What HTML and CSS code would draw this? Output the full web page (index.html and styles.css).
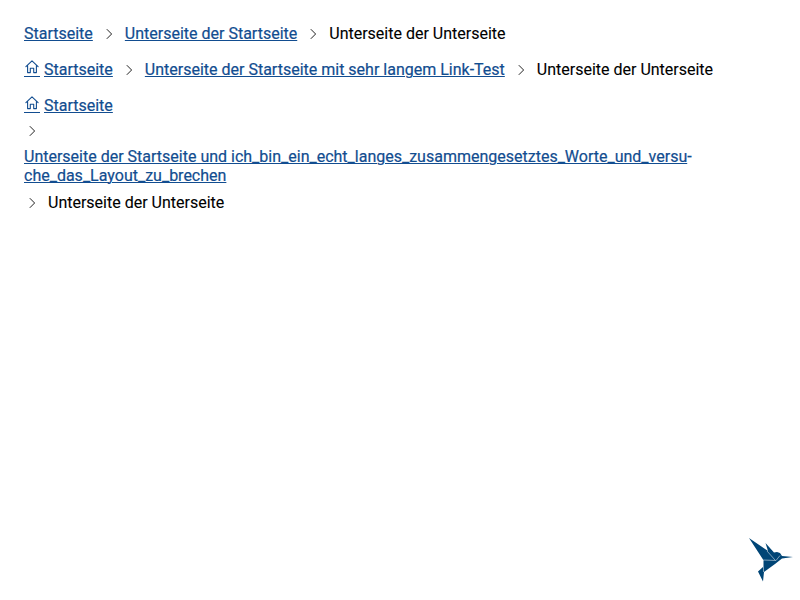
FILE: index.html
```html
<!DOCTYPE html>
<html lang="de">
<head>
<meta charset="utf-8">
<title>Breadcrumb</title>
<link rel="stylesheet" href="styles.css">
</head>
<body>
<svg class="defs" aria-hidden="true">
  <symbol id="chevron" viewBox="0 0 16 16"><path d="M5.800 3.200 10.600 8 5.800 12.800" fill="none" stroke="currentColor" stroke-width="1"/></symbol>
  <symbol id="home" viewBox="0 0 16 16"><path d="M1.900 7.700 8 1.800l6.100 5.900M3.600 6.400v7.200h2.700V9.200h3.400v4.400h2.700V6.400" fill="none" stroke="currentColor" stroke-width="1.100" stroke-linejoin="round" stroke-linecap="round"/></symbol>
</svg>
<main class="page">
  <nav class="crumbs">
    <a href="#">Startseite</a>
    <svg class="sep"><use href="#chevron"/></svg>
    <a href="#">Unterseite der Startseite</a>
    <svg class="sep"><use href="#chevron"/></svg>
    <span>Unterseite der Unterseite</span>
  </nav>
  <nav class="crumbs">
    <a class="with-icon" href="#"><svg class="home"><use href="#home"/></svg><span class="label">Startseite</span></a>
    <svg class="sep"><use href="#chevron"/></svg>
    <a href="#">Unterseite der Startseite mit sehr langem Link-Test</a>
    <svg class="sep"><use href="#chevron"/></svg>
    <span>Unterseite der Unterseite</span>
  </nav>
  <nav class="crumbs stacked">
    <a class="with-icon" href="#"><svg class="home"><use href="#home"/></svg><span class="label">Startseite</span></a>
    <svg class="sep"><use href="#chevron"/></svg>
    <a href="#">Unterseite der Startseite und ich_bin_ein_echt_langes_zusammengesetztes_Worte_und_versu<span class="hyphen">-</span><br>che_das_Layout_zu_brechen</a>
    <div class="crumbs"><svg class="sep"><use href="#chevron"/></svg><span>Unterseite der Unterseite</span></div>
  </nav>
</main>
<svg class="logo" viewBox="0 0 44 44">
  <path fill="#004576" d="M0 0 19 13 16.500 5 25 14.500 28 14 31 15 33 18 44 19 33 20.500 26 26 15 34 14 43.500 9 33.500 14 29V21.500Z"/>
  <path fill="none" stroke="#fff" stroke-width=".5" d="M18 13 26 22M14 22l13 .5 4-5M14.500 22v12"/>
</svg>
</body>
</html>
```
FILE: styles.css
```css
body {
  margin: 0;
  background: #fff;
  color: #000;
  font: 16px/19px Roboto, sans-serif;
  -webkit-text-stroke: 0.1px;
}
a { color: #124d90; text-underline-offset: 1px; text-decoration-thickness: 1px; -webkit-text-stroke: 0.2px; }
.defs { display: none; }
.page { display: flex; flex-direction: column; gap: 17px; padding: 24px; }
.crumbs { display: flex; align-items: center; gap: 8px; white-space: nowrap; }
.stacked { flex-direction: column; align-items: flex-start; }
.sep { width: 16px; height: 16px; flex: none; color: #222; }
.with-icon { display: flex; gap: 4px; text-decoration: none; }
.home { width: 16px; height: 16px; margin-top: -1px; padding-bottom: 1px; border-bottom: 1px solid; }
.label { text-decoration: underline; text-decoration-thickness: 1px; }
.hyphen { display: inline-block; text-decoration: none; }
.logo { position: fixed; left: 749px; top: 538px; width: 44px; height: 44px; }
```
